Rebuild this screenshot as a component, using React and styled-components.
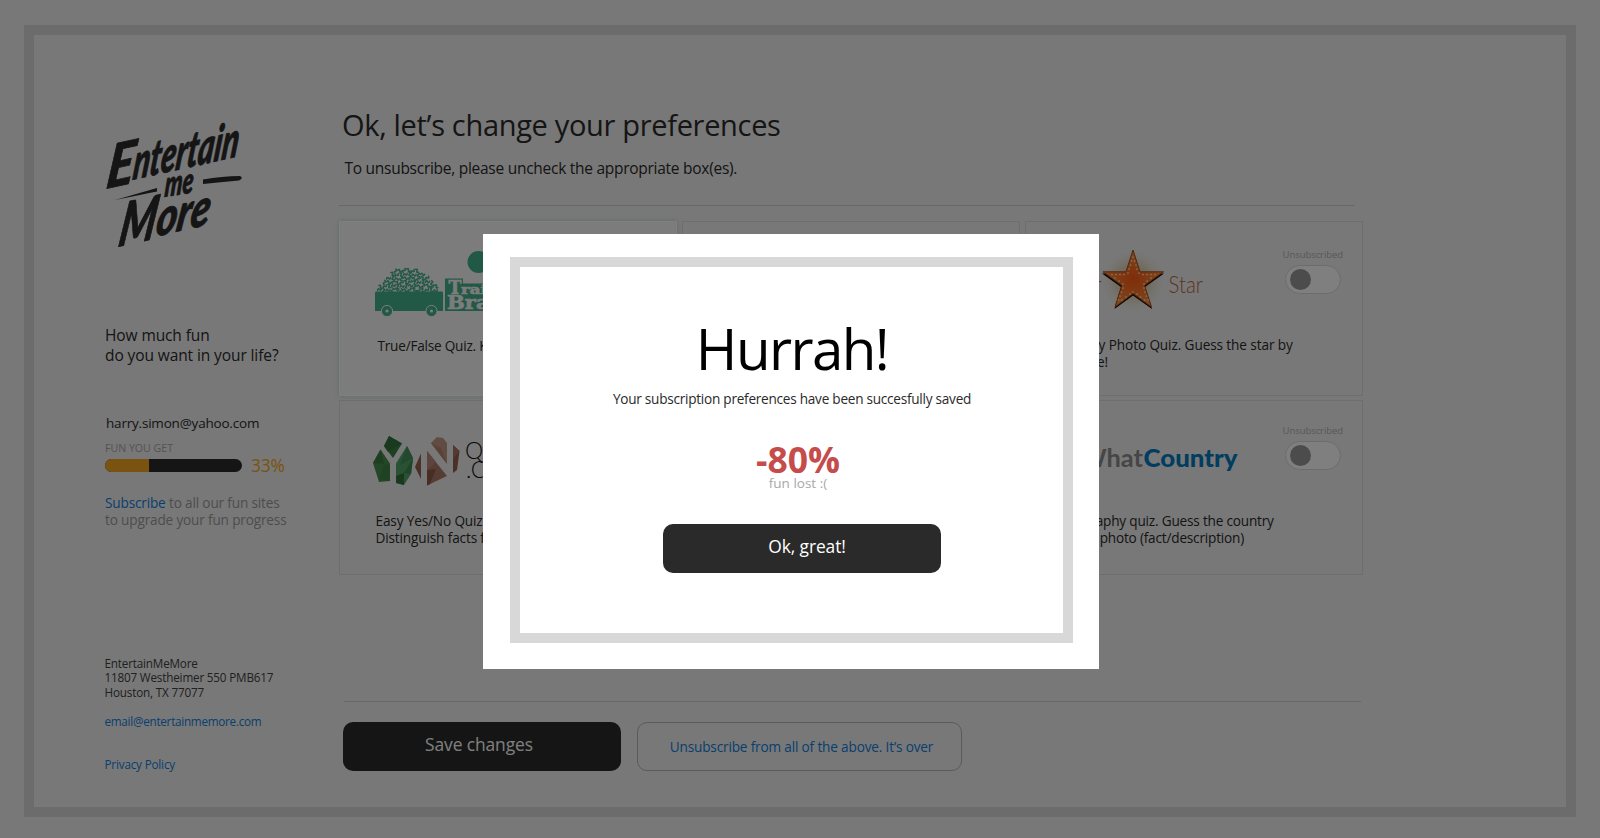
import React from "react";
import styled, { createGlobalStyle, css } from "styled-components";

const GlobalStyle = createGlobalStyle`
  *, *::before, *::after { box-sizing: border-box; }
  body {
    margin: 0;
    background: #f0f0f0;
    font-family: "Open Sans", "Noto Sans", sans-serif;
    color: #2a2a2a;
  }
  button { font-family: inherit; cursor: pointer; }
  p, h1, h2 { margin: 0; font-weight: 400; }
`;

const Page = styled.div`
  position: relative;
  width: 1600px;
  height: 838px;
  padding: 25px 24px 21px;
  overflow: hidden;
`;

const PageFrame = styled.div`
  display: grid;
  grid-template-columns: 305px 1fr;
  height: 792px;
  border: 10px solid #d8d8d8;
`;

/* Sidebar */

const Sidebar = styled.aside`
  display: flex;
  flex-direction: column;
  align-items: flex-start;
  padding: 75px 0 0 71px;
`;

const BrandLogo = styled.svg`
  display: block;
  width: 160px;
  height: 150px;
  margin-left: -10px;
  overflow: visible;
`;

const Question = styled.p`
  margin-top: 65px;
  font-size: 15.5px;
  line-height: 20px;
  letter-spacing: -0.1px;
  white-space: nowrap;
`;

const Email = styled.p`
  margin: 49px 0 0 1px;
  font-size: 13.5px;
  line-height: 18px;
  letter-spacing: -0.2px;
`;

const MeterLabel = styled.p`
  margin-top: 9px;
  font-size: 10.6px;
  line-height: 14px;
  color: #a8a8a8;
`;

const MeterRow = styled.div`
  display: flex;
  align-items: center;
  gap: 9px;
  height: 13px;
  margin-top: 4px;
`;

const MeterTrack = styled.div`
  width: 137px;
  height: 13px;
  border-radius: 7px;
  background: #2a2a2a;
  overflow: hidden;
`;

const MeterFill = styled.div`
  height: 100%;
  background: #f5a623;
`;

const MeterValue = styled.span`
  font-size: 17.4px;
  line-height: 13px;
  letter-spacing: -0.2px;
  color: #f5a623;
`;

const Hint = styled.p`
  margin-top: 22px;
  font-size: 13.6px;
  line-height: 17px;
  letter-spacing: -0.16px;
  color: #9b9b9b;
  white-space: nowrap;
`;

const Link = styled.a`
  color: #0f7fdc;
  text-decoration: none;
`;

const Address = styled.div`
  display: flex;
  flex-direction: column;
  margin: 128px 0 0 -0.5px;
  font-size: 11.7px;
  line-height: 14.4px;
  letter-spacing: -0.18px;
  color: #404040;
  white-space: nowrap;
`;

const AddressLink = styled(Link)`
  margin-top: ${(p) => p.$gap}px;
  letter-spacing: ${(p) => p.$tracking}px;
`;

/* Main column */

const Main = styled.main`
  padding-top: 70px;
`;

const Title = styled.h1`
  padding-left: 3px;
  font-size: 29px;
  line-height: 40px;
  letter-spacing: -0.32px;
`;

const Subtitle = styled.p`
  margin-top: 12px;
  padding-left: 5.5px;
  font-size: 15.5px;
  line-height: 22px;
  letter-spacing: -0.27px;
`;

const Rule = styled.hr`
  width: ${(p) => p.$width}px;
  height: 1px;
  margin: ${(p) => p.$top}px 0 0 ${(p) => p.$left || 0}px;
  border: 0;
  background: #d0d0d0;
`;

const CardGrid = styled.div`
  display: grid;
  grid-template-columns: repeat(3, 338px);
  grid-auto-rows: 175px;
  gap: 4px 5px;
  margin-top: 15px;
`;

const Card = styled.section`
  border: 1px solid #dcdcdc;
  ${(p) =>
    p.$active &&
    css`
      background: #f8f8f8;
      border-color: #ffffff;
      box-shadow: 0 0 5px rgba(90, 160, 150, 0.3);
    `}
`;

const CardTop = styled.div`
  display: flex;
  justify-content: space-between;
  padding-right: 19px;
`;

const CardLogo = styled.svg`
  display: block;
  width: 240px;
  height: 108px;
`;

const Description = styled.p`
  padding-left: ${(p) => p.$indent}px;
  padding-top: ${(p) => p.$drop}px;
  font-size: 13.6px;
  line-height: 16.7px;
  letter-spacing: ${(p) => p.$tracking || -0.14}px;
  white-space: nowrap;
`;

const Subscription = styled.div`
  display: flex;
  flex-direction: column;
  align-items: center;
  gap: 4px;
  padding-top: ${(p) => p.$drop}px;
`;

const SubscriptionLabel = styled.span`
  font-size: 9.6px;
  line-height: 12px;
  letter-spacing: -0.12px;
  color: #b0b0b0;
`;

const Toggle = styled.span`
  display: flex;
  align-items: center;
  width: 56px;
  height: 29px;
  padding-left: 4px;
  border: 1px solid #d8d8d8;
  border-radius: 15px;
  background: #ffffff;
`;

const Knob = styled.span`
  width: 21px;
  height: 21px;
  border-radius: 50%;
  background: #999999;
`;

const Actions = styled.div`
  display: flex;
  gap: 16px;
  margin: 20px 0 0 4px;
`;

const SolidButton = styled.button`
  width: 278px;
  height: 49px;
  padding: ${(p) => p.$pad};
  border: 0;
  border-radius: 10px;
  background: #2a2a2a;
  color: #ffffff;
  font-size: 17.4px;
  letter-spacing: -0.1px;
`;

const OutlineButton = styled.button`
  width: 325px;
  height: 49px;
  padding: 0 0 1px 4px;
  border: 1px solid #b4b4b4;
  border-radius: 10px;
  background: transparent;
  color: #0f7fdc;
  font-size: 13.6px;
  letter-spacing: -0.16px;
`;

/* Dialog */

const Overlay = styled.div`
  position: absolute;
  inset: 0;
  padding: 234px 0 0 483px;
  background: rgba(0, 0, 0, 0.5);
`;

const Dialog = styled.div`
  width: 616px;
  height: 435px;
  padding: 23px 26px 26px 27px;
  background: #ffffff;
`;

const DialogFrame = styled.div`
  display: flex;
  flex-direction: column;
  align-items: center;
  height: 386px;
  padding-top: 52px;
  border: 10px solid #d8d8d8;
`;

const DialogTitle = styled.h2`
  padding-left: 1px;
  font-size: 56.5px;
  line-height: 60px;
  letter-spacing: -1.6px;
  color: #000000;
`;

const DialogText = styled.p`
  margin-top: 11px;
  padding-left: 1px;
  font-size: 13.6px;
  line-height: 18px;
  letter-spacing: -0.25px;
`;

const Loss = styled.p`
  margin-top: 31px;
  padding-left: 13px;
  font-size: 35.5px;
  font-weight: 700;
  line-height: 40px;
  color: #c64c4c;
`;

const LossLabel = styled.p`
  margin: -5px 0 32px;
  padding-left: 13px;
  font-size: 13.5px;
  line-height: 18px;
  color: #a8a8a8;
`;

const DialogAction = styled.div`
  padding-left: 21px;
`;

/* Drawings */

function EntertainLogo() {
  return (
    <BrandLogo
      viewBox="95 110 160 150"
      fill="#2a2a2a"
      stroke="#2a2a2a"
      strokeWidth="0.8"
      strokeLinejoin="round"
      fontFamily="Lato"
      fontStyle="italic"
      fontWeight="900"
    >
      <g transform="translate(105 189) rotate(-12.5) skewX(-20)">
        <text fontSize="58" x="0" y="0" textLength="28" lengthAdjust="spacingAndGlyphs">E</text>
        <text fontSize="48" x="27" y="-3" textLength="108" lengthAdjust="spacingAndGlyphs">ntertain</text>
      </g>
      <g transform="translate(164 197) rotate(-9) skewX(-14)">
        <text fontSize="35" x="0" y="0" textLength="29" lengthAdjust="spacingAndGlyphs">me</text>
      </g>
      <g transform="translate(117 247) rotate(-12.5) skewX(-22)">
        <text fontSize="58" x="0" y="0" textLength="38" lengthAdjust="spacingAndGlyphs">M</text>
        <text fontSize="50" x="38" y="-2" textLength="55" lengthAdjust="spacingAndGlyphs">ore</text>
      </g>
      <path d="M115 200L157 188V191.500Q140 195 115 200Z" strokeWidth="0" />
      <path d="M203 179.500Q222 176 240 176Q244 178 239 180.500Q220 182 203 184Z" strokeWidth="0" />
    </BrandLogo>
  );
}

const curls = [];
for (let row = 0; row < 6; row += 1) {
  const y = 289.5 - row * 3.9;
  const from = 379.5 + [0, 1, 5, 9, 13, 16][row];
  const to = 439 - [0, 1, 4, 8, 13, 19][row];
  for (let x = from, i = 0; x <= to; x += 4.3, i += 1) {
    curls.push({ x, y: y + ((i * 7 + row * 3) % 4) * 0.4, turn: (i * 97 + row * 61) % 360 });
  }
}

function TrainBrainLogo() {
  return (
    <CardLogo viewBox="340 222 240 108">
      <g fill="none" stroke="#45b08c" strokeWidth="1.5" strokeLinecap="round">
        {curls.map((c, i) => (
          <path key={i} d="M-1.9 0.900Q-1.6 -1.8 0 0T1.900 -0.900" transform={`translate(${c.x} ${c.y}) rotate(${c.turn})`} />
        ))}
      </g>
      <path d="M376 291.500H442Q443 291.500 443 293V311H375V293Q375 291.500 376 291.500Z" fill="#45b08c" />
      <g fill="#45b08c" stroke="#f8f8f8" strokeWidth="1">
        <circle cx="387" cy="311" r="5.6" />
        <circle cx="431.500" cy="311" r="5.6" />
      </g>
      <circle cx="387" cy="311" r="1.6" fill="#f8f8f8" />
      <circle cx="431.500" cy="311" r="1.6" fill="#f8f8f8" />
      <circle cx="478.500" cy="262" r="11" fill="#45b08c" />
      <path d="M445 278.500H463V283.500H500V311H445Z" fill="#45b08c" />
      <g fill="#f8f8f8" stroke="#f8f8f8" strokeWidth="0.6" fontFamily="DejaVu Serif" fontWeight="700">
        <text x="448.500" y="294" fontSize="18" textLength="13" lengthAdjust="spacingAndGlyphs">T</text>
        <text x="461" y="294" fontSize="13" textLength="38" lengthAdjust="spacingAndGlyphs">rain</text>
        <text x="447" y="308.500" fontSize="18" textLength="66" lengthAdjust="spacingAndGlyphs">Brain</text>
      </g>
    </CardLogo>
  );
}

function YesNoLogo() {
  return (
    <CardLogo viewBox="340 401 240 108">
      <g>
        <path d="M389 436L402 443.500L393 458L384 446Z" fill="#3b8141" />
        <path d="M389 436L402 443.500L388 452L384 446Z" fill="#357540" />
        <path d="M380.500 449.500L390 463.500V481L379 482L373 463Z" fill="#468e4e" />
        <path d="M380.500 449.500L384 464L373 463Z" fill="#3a7d42" />
        <path d="M384 464L390 465V481L379 479Z" fill="#3f8546" />
        <path d="M407 446L413 458L411 474L404 485L396 483V463.500Z" fill="#52a368" />
        <path d="M407 446L413 458L400 465Z" fill="#46915a" />
        <path d="M396 476L404 473L404 485L396 483Z" fill="#32713a" />
        <path d="M413 458L411 474L404 473Z" fill="#408a4c" />
      </g>
      <g>
        <path d="M421 453.500V479L415 467Z" fill="#95604f" />
        <path d="M427 451L447 476L427 485.500Z" fill="#ad7b69" />
        <path d="M427 451L436 462L427 470Z" fill="#b98a78" />
        <path d="M427 470L436 469L430 484L427 485.500Z" fill="#8f5b49" />
        <path d="M431 443L437 437L443 438L447 443V464Z" fill="#c29887" />
        <path d="M431 443L441 448L447 464Z" fill="#b5846f" />
        <path d="M453 445L459.500 451L457 470L453 473Z" fill="#95604f" />
        <path d="M453 445L459.500 451L453 459Z" fill="#a87562" />
      </g>
      <g fill="#101010" fontFamily="Lato" fontWeight="300" fontSize="23">
        <text x="465" y="459">Quiz</text>
        <text x="466" y="478">.Com</text>
      </g>
    </CardLogo>
  );
}

const bulbs = [
  [1133, 257], [1131.5, 261], [1134.5, 261], [1130.5, 265], [1136, 265], [1129, 269], [1137, 269], [1128, 273], [1139, 273],
  [1124, 274.5], [1120, 274.5], [1116, 274.5], [1112, 274.5], [1143, 274.5], [1147, 274.5], [1151, 274.5], [1155, 274.5],
  [1115, 278], [1119, 281], [1123, 284], [1151, 278], [1147, 281], [1144, 284], [1123, 288], [1121.5, 292], [1120, 296], [1118.5, 300],
  [1144, 288], [1145, 292], [1146.5, 296], [1148, 300], [1122, 300], [1126, 297], [1130, 294], [1137, 294], [1140.5, 297], [1144.5, 300], [1133, 292],
];

function StarLogo() {
  return (
    <CardLogo viewBox="1026 222 240 108">
      <defs>
        <radialGradient id="halo">
          <stop offset="0.45" stopColor="#cdb071" stopOpacity="0.5" />
          <stop offset="1" stopColor="#e8dcc0" stopOpacity="0" />
        </radialGradient>
        <radialGradient id="starFill">
          <stop offset="0" stopColor="#ff5a14" />
          <stop offset="1" stopColor="#ff9038" />
        </radialGradient>
      </defs>
      <circle cx="1133" cy="281" r="31" fill="url(#halo)" />
      <path d="M1133 251.500L1140 273.500H1164L1145 287L1152 309L1133 295.500L1114.500 309L1121 287L1102 273.500H1126Z" fill="#160a05" />
      <path d="M1133 250L1140 271.800H1163.500L1144.500 285.500L1151.500 307L1133 293.500L1115 307L1121.800 285.500L1103 271.800H1126Z" fill="url(#starFill)" stroke="#a84c18" strokeWidth="1" />
      {bulbs.map(([x, y], i) => (
        <circle key={i} cx={x} cy={y} r="0.85" fill="#fff0d8" />
      ))}
      <g fill="#c0683c" fontFamily="Lato" fontWeight="300" fontSize="24">
        <text x="1168.500" y="293" textLength="34.500" lengthAdjust="spacingAndGlyphs">Star</text>
        <text x="1101.500" y="293" textAnchor="end">Your</text>
      </g>
    </CardLogo>
  );
}

function CountryLogo() {
  return (
    <CardLogo viewBox="1026 401 240 108">
      <g fontFamily="Lato" fontWeight="900" fontSize="24">
        <text x="1080" y="467" fill="#8c8c8c" fontWeight="700" textLength="63" lengthAdjust="spacingAndGlyphs">What</text>
        <text x="1143.500" y="467" fill="#007ac2" textLength="94" lengthAdjust="spacingAndGlyphs">Country</text>
      </g>
    </CardLogo>
  );
}

function Unsubscribed({ drop }) {
  return (
    <Subscription $drop={drop}>
      <SubscriptionLabel>Unsubscribed</SubscriptionLabel>
      <Toggle role="switch" aria-checked="false">
        <Knob />
      </Toggle>
    </Subscription>
  );
}

export default function App() {
  return (
    <>
      <GlobalStyle />
      <Page>
        <PageFrame>
          <Sidebar>
            <EntertainLogo />
            <Question>
              How much fun
              <br />
              do you want in your life?
            </Question>
            <Email>harry.simon@yahoo.com</Email>
            <MeterLabel>FUN YOU GET</MeterLabel>
            <MeterRow>
              <MeterTrack>
                <MeterFill style={{ width: "32%" }} />
              </MeterTrack>
              <MeterValue>33%</MeterValue>
            </MeterRow>
            <Hint>
              <Link>Subscribe</Link> to all our fun sites
              <br />
              to upgrade your fun progress
            </Hint>
            <Address>
              <span>EntertainMeMore</span>
              <span>11807 Westheimer 550 PMB617</span>
              <span>Houston, TX 77077</span>
              <AddressLink $gap={14.4} $tracking={-0.26}>email@entertainmemore.com</AddressLink>
              <AddressLink $gap={28.8} $tracking={-0.18}>Privacy Policy</AddressLink>
            </Address>
          </Sidebar>

          <Main>
            <Title>Ok, let’s change your preferences</Title>
            <Subtitle>To unsubscribe, please uncheck the appropriate box(es).</Subtitle>
            <Rule $top={26} $width={1016} />
            <CardGrid>
              <Card $active>
                <CardTop>
                  <TrainBrainLogo />
                </CardTop>
                <Description $indent={37.5} $drop={8.4} $tracking={-0.22}>True/False Quiz. Know</Description>
              </Card>
              <Card />
              <Card>
                <CardTop>
                  <StarLogo />
                  <Unsubscribed drop={27} />
                </CardTop>
                <Description $indent={24} $drop={7.4} $tracking={-0.1}>
                  Celebrity Photo Quiz. Guess the star by
                  <br />
                  his smile!
                </Description>
              </Card>
              <Card>
                <CardTop>
                  <YesNoLogo />
                </CardTop>
                <Description $indent={35.5} $drop={4.4}>
                  Easy Yes/No Quiz.
                  <br />
                  Distinguish facts from
                </Description>
              </Card>
              <Card />
              <Card>
                <CardTop>
                  <CountryLogo />
                  <Unsubscribed drop={24} />
                </CardTop>
                <Description $indent={32} $drop={4.4} $tracking={-0.19}>
                  Geography quiz. Guess the country
                  <br />
                  by the photo (fact/description)
                </Description>
              </Card>
            </CardGrid>
            <Rule $top={126} $left={5} $width={1017} />
            <Actions>
              <SolidButton $pad="0 6px 5px 0">Save changes</SolidButton>
              <OutlineButton>Unsubscribe from all of the above. It’s over</OutlineButton>
            </Actions>
          </Main>
        </PageFrame>

        <Overlay>
          <Dialog role="dialog" aria-modal="true">
            <DialogFrame>
              <DialogTitle>Hurrah!</DialogTitle>
              <DialogText>Your subscription preferences have been succesfully saved</DialogText>
              <Loss>-80%</Loss>
              <LossLabel>fun lost :(</LossLabel>
              <DialogAction>
                <SolidButton $pad="0 0 5px 10px">Ok, great!</SolidButton>
              </DialogAction>
            </DialogFrame>
          </Dialog>
        </Overlay>
      </Page>
    </>
  );
}
